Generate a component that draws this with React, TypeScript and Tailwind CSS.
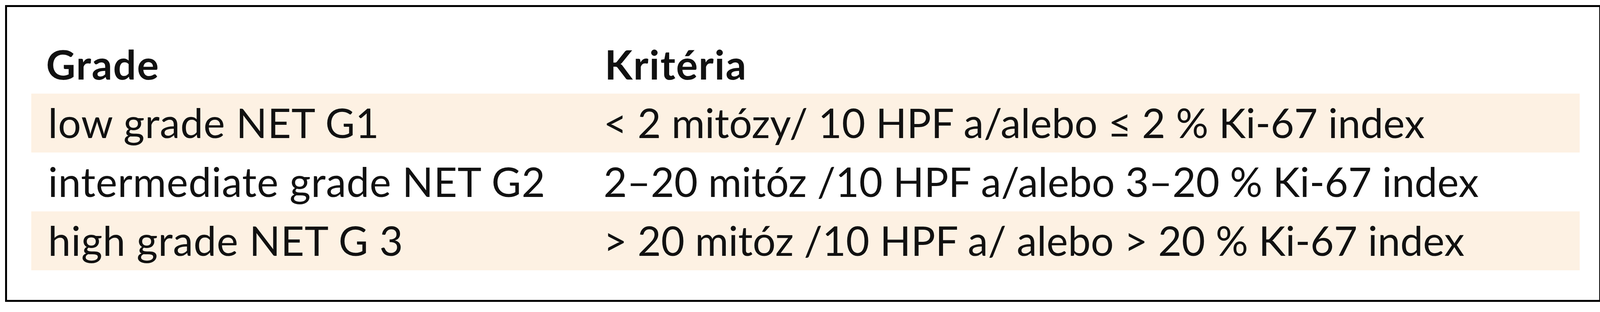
const rows = [
  {
    grade: "low grade NET G1",
    criteria: "< 2 mitózy/ 10 HPF a/alebo ≤ 2 % Ki-67 index",
    shaded: true,
  },
  {
    grade: "intermediate grade NET G2",
    criteria: "2–20 mitóz /10 HPF a/alebo 3–20 % Ki-67 index",
    shaded: false,
  },
  {
    grade: "high grade NET G 3",
    criteria: "> 20 mitóz /10 HPF a/ alebo > 20 % Ki-67 index",
    shaded: true,
  },
];

export default function App() {
  return (
    <div className="w-[4112px] h-[800px] bg-white pl-[13px] pt-[13px] font-['Lato',_'Open_Sans',_sans-serif] text-[#111]">
      <div className="w-[4086px] h-[761px] border-[5px] border-black pt-[72px] pl-[62px] pr-[50px]">
        {/* header */}
        <div className="grid grid-cols-[1430px_1fr] h-[150px] leading-[148px] text-[104px] font-bold tracking-[2px] pl-[38px]">
          <div>Grade</div>
          <div>Kritéria</div>
        </div>
        {rows.map((row, i) => (
          <div
            key={i}
            className={
              row.shaded
                ? "grid grid-cols-[1422px_1fr] h-[151px] leading-[148px] text-[104px] pl-[43px] bg-[#fdf1e3]"
                : "grid grid-cols-[1422px_1fr] h-[151px] leading-[148px] text-[104px] pl-[43px]"
            }
          >
            <div className="whitespace-nowrap tracking-[1px]">{row.grade}</div>
            <div className="whitespace-nowrap">{row.criteria}</div>
          </div>
        ))}
      </div>
    </div>
  );
}
